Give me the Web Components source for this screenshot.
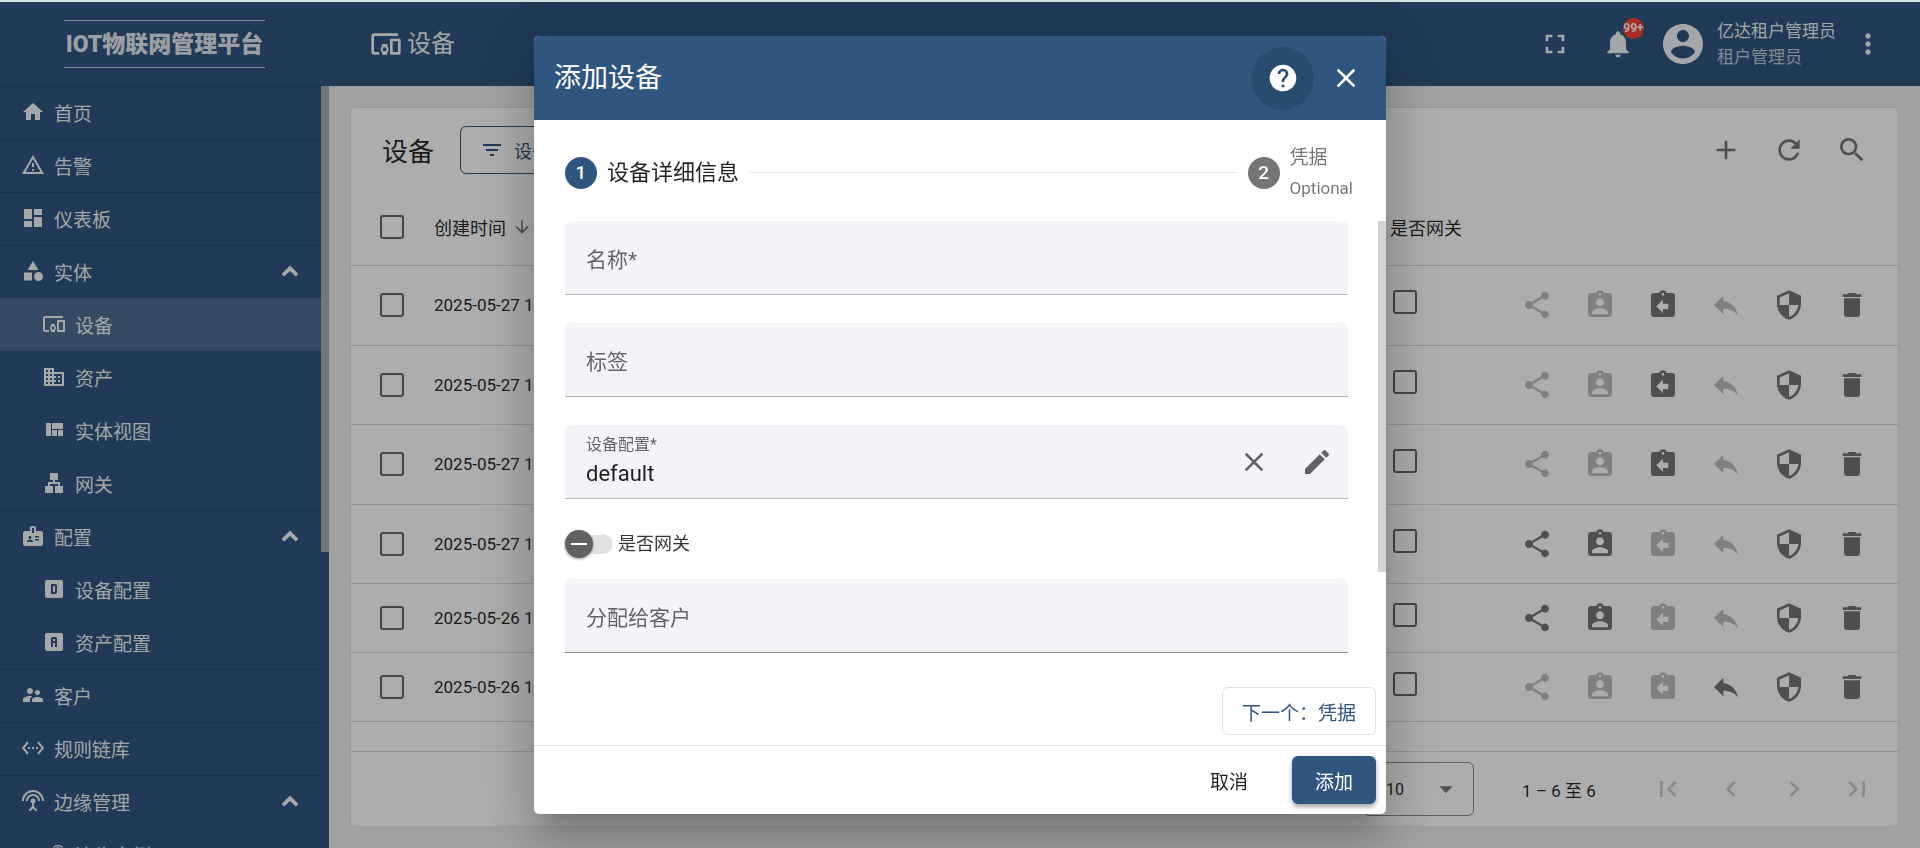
<!DOCTYPE html>
<html lang="zh-CN">
<head>
<meta charset="utf-8">
<title>设备</title>
<style>
  html, body { margin: 0; height: 100%; }
  body {
    font-family: Roboto, "Noto Sans CJK SC", sans-serif;
    --primary: #305680;
    background: #eee;
    overflow: hidden;
  }
</style>
</head>
<body>
<iot-app></iot-app>

<script>
const ICONS = {
  home: 'M10 20v-6h4v6h5v-8h3L12 3 2 12h3v8z',
  alert: 'M12 2L1 21h22M12 6l7.53 13H4.47M11 10v4h2v-4M11 16v2h2v-2',
  dashboard: 'M13 3v6h8V3M13 21h8V11h-8M3 21h8v-6H3M3 13h8V3H3z',
  shapes: 'M12 2L6.5 11h11zM17.5 13a4.5 4.5 0 1 0 0 9 4.5 4.5 0 0 0 0-9zM3 13.5h8v8H3z',
  devices: 'M3 6h18V4H3c-1.1 0-2 .9-2 2v12c0 1.1.9 2 2 2h4v-2H3V6zm10 6H9v1.78c-.61.55-1 1.33-1 2.22s.39 1.67 1 2.22V20h4v-1.78c.61-.55 1-1.34 1-2.22s-.39-1.67-1-2.22V12zm-2 5.5c-.83 0-1.5-.67-1.5-1.5s.67-1.5 1.5-1.5 1.5.67 1.5 1.5-.67 1.5-1.5 1.5zM22 8h-6c-.5 0-1 .5-1 1v10c0 .5.5 1 1 1h6c.5 0 1-.5 1-1V9c0-.5-.5-1-1-1zm-1 10h-4v-8h4v8z',
  domain: 'M12 7V3H2v18h20V7H12zM6 19H4v-2h2v2zm0-4H4v-2h2v2zm0-4H4V9h2v2zm0-4H4V5h2v2zm4 12H8v-2h2v2zm0-4H8v-2h2v2zm0-4H8V9h2v2zm0-4H8V5h2v2zm10 12h-8v-2h2v-2h-2v-2h2v-2h-2V9h8v10zm-2-8h-2v2h2v-2zm0 4h-2v2h2v-2z',
  quilt: 'M10 18h5v-6h-5v6zm-6 0h5V5H4v13zm12 0h5v-6h-5v6zM10 5v6h11V5H10z',
  lan: 'M13 22h8v-7h-3v-4h-5V9h3V2H8v7h3v2H6v4H3v7h8v-7H8v-2h8v2h-3z',
  badge: 'M20 7h-5V4c0-1.1-.9-2-2-2h-2c-1.1 0-2 .9-2 2v3H4c-1.1 0-2 .9-2 2v11c0 1.1.9 2 2 2h16c1.1 0 2-.9 2-2V9c0-1.1-.9-2-2-2zM9 12c.83 0 1.5.67 1.5 1.5S9.83 15 9 15s-1.5-.67-1.5-1.5S8.17 12 9 12zm3 6H6v-.75c0-1 2-1.5 3-1.5s3 .5 3 1.5V18zm1-9h-2V4h2v5zm5 7.5h-4V15h4v1.5zm0-3h-4V12h4v1.5z',
  boxD: 'M9 7h4a2 2 0 0 1 2 2v6a2 2 0 0 1-2 2H9V7m2 2v6h2V9h-2M5 3h14a2 2 0 0 1 2 2v14a2 2 0 0 1-2 2H5a2 2 0 0 1-2-2V5a2 2 0 0 1 2-2z',
  boxA: 'M11 7h2a2 2 0 0 1 2 2v8h-2v-4h-2v4H9V9a2 2 0 0 1 2-2m0 2v2h2V9h-2M5 3h14a2 2 0 0 1 2 2v14a2 2 0 0 1-2 2H5a2 2 0 0 1-2-2V5a2 2 0 0 1 2-2z',
  people: 'M16.5 12c1.38 0 2.49-1.12 2.49-2.5S17.88 7 16.5 7 14 8.12 14 9.5s1.12 2.5 2.5 2.5zM9 11c1.66 0 2.99-1.34 2.99-3S10.66 5 9 5 6 6.34 6 8s1.34 3 3 3zm7.5 3c-1.83 0-5.5.92-5.5 2.75V19h11v-2.25c0-1.83-3.67-2.75-5.5-2.75zM9 13c-2.33 0-7 1.17-7 3.5V19h7v-2.25c0-.85.33-2.34 2.37-3.47C10.5 13.1 9.66 13 9 13z',
  ethernet: 'M7.77 6.76L6.23 5.48.82 12l5.41 6.52 1.54-1.28L3.42 12l4.35-5.24zM7 13h2v-2H7v2zm10-2h-2v2h2v-2zm-6 2h2v-2h-2v2zm6.77-7.52l-1.54 1.28L20.58 12l-4.35 5.24 1.54 1.28L23.18 12l-5.41-6.52z',
  antenna: 'M12 5c-3.87 0-7 3.13-7 7h2c0-2.76 2.24-5 5-5s5 2.24 5 5h2c0-3.87-3.13-7-7-7zm1 9.29c.88-.39 1.5-1.26 1.5-2.29 0-1.38-1.12-2.5-2.5-2.5S9.5 10.62 9.5 12c0 1.02.62 1.9 1.5 2.29v3.3L7.59 21 9 22.41l3-3 3 3L16.41 21 13 17.59v-3.3zM12 1C5.93 1 1 5.93 1 12h2c0-4.97 4.03-9 9-9s9 4.03 9 9h2c0-6.07-4.93-11-11-11z',
  router: 'M20.2 5.9l.8-.8C19.6 3.7 17.8 3 16 3s-3.6.7-5 2.1l.8.8C13 4.8 14.5 4.2 16 4.2s3 .6 4.2 1.7zm-.9.8c-.9-.9-2.1-1.4-3.3-1.4s-2.4.5-3.3 1.4l.8.8c.7-.7 1.6-1 2.5-1 .9 0 1.8.3 2.5 1l.8-.8zM19 13h-2V9h-2v4H5c-1.1 0-2 .9-2 2v4c0 1.1.9 2 2 2h14c1.1 0 2-.9 2-2v-4c0-1.1-.9-2-2-2z',
  chevron: 'M12 6.5l8.4 8.4-2.7 2.7L12 11.9l-5.7 5.7-2.7-2.7z',
  fullscreen: 'M7 14H5v5h5v-2H7v-3zm-2-4h2V7h3V5H5v5zm12 7h-3v2h5v-5h-2v3zM14 5v2h3v3h2V5h-5z',
  bell: 'M12 22c1.1 0 2-.9 2-2h-4c0 1.1.89 2 2 2zm6-6v-5c0-3.07-1.64-5.64-4.5-6.32V4c0-.83-.67-1.5-1.5-1.5s-1.5.67-1.5 1.5v.68C7.63 5.36 6 7.92 6 11v5l-2 2v1h16v-1l-2-2z',
  account: 'M12 2C6.48 2 2 6.48 2 12s4.48 10 10 10 10-4.48 10-10S17.52 2 12 2zm0 3c1.66 0 3 1.34 3 3s-1.34 3-3 3-3-1.34-3-3 1.34-3 3-3zm0 14.2c-2.5 0-4.71-1.28-6-3.22.03-1.99 4-3.08 6-3.08 1.99 0 5.97 1.09 6 3.08-1.29 1.94-3.5 3.22-6 3.22z',
  more: 'M12 8c1.1 0 2-.9 2-2s-.9-2-2-2-2 .9-2 2 .9 2 2 2zm0 2c-1.1 0-2 .9-2 2s.9 2 2 2 2-.9 2-2-.9-2-2-2zm0 6c-1.1 0-2 .9-2 2s.9 2 2 2 2-.9 2-2-.9-2-2-2z',
  add: 'M19 13h-6v6h-2v-6H5v-2h6V5h2v6h6v2z',
  refresh: 'M17.65 6.35C16.2 4.9 14.21 4 12 4c-4.42 0-7.99 3.58-7.99 8s3.57 8 7.99 8c3.73 0 6.84-2.55 7.73-6h-2.08c-.82 2.33-3.04 4-5.65 4-3.31 0-6-2.69-6-6s2.69-6 6-6c1.66 0 3.14.69 4.22 1.78L13 11h7V4l-2.35 2.35z',
  search: 'M15.5 14h-.79l-.28-.27C15.41 12.59 16 11.11 16 9.5 16 5.91 13.09 3 9.5 3S3 5.91 3 9.5 5.91 16 9.5 16c1.61 0 3.09-.59 4.23-1.57l.27.28v.79l5 4.99L20.49 19l-4.99-5zm-6 0C7.01 14 5 11.99 5 9.5S7.01 5 9.5 5 14 7.01 14 9.5 11.99 14 9.5 14z',
  filter: 'M10 18h4v-2h-4v2zM3 6v2h18V6H3zm3 7h12v-2H6v2z',
  down: 'M20 12l-1.41-1.41L13 16.17V4h-2v12.17l-5.58-5.59L4 12l8 8 8-8z',
  share: 'M18 16.08c-.76 0-1.44.3-1.96.77L8.91 12.7c.05-.23.09-.46.09-.7s-.04-.47-.09-.7l7.05-4.11c.54.5 1.25.81 2.04.81 1.66 0 3-1.34 3-3s-1.34-3-3-3-3 1.34-3 3c0 .24.04.47.09.7L8.04 9.81C7.5 9.31 6.79 9 6 9c-1.66 0-3 1.34-3 3s1.34 3 3 3c.79 0 1.5-.31 2.04-.81l7.12 4.16c-.05.21-.08.43-.08.65 0 1.61 1.31 2.92 2.92 2.92s2.92-1.31 2.92-2.92-1.31-2.92-2.92-2.92z',
  assign: 'M19 3h-4.18C14.4 1.84 13.3 1 12 1c-1.3 0-2.4.84-2.82 2H5c-1.1 0-2 .9-2 2v14c0 1.1.9 2 2 2h14c1.1 0 2-.9 2-2V5c0-1.1-.9-2-2-2zm-7 0c.55 0 1 .45 1 1s-.45 1-1 1-1-.45-1-1 .45-1 1-1zm0 4c1.66 0 3 1.34 3 3s-1.34 3-3 3-3-1.34-3-3 1.34-3 3-3zm6 12H6v-1.4c0-2 4-3.1 6-3.1s6 1.1 6 3.1V19z',
  unassign: 'M19 3h-4.18C14.4 1.84 13.3 1 12 1c-1.3 0-2.4.84-2.82 2H5c-1.1 0-2 .9-2 2v14c0 1.1.9 2 2 2h14c1.1 0 2-.9 2-2V5c0-1.1-.9-2-2-2zm-7 0c.55 0 1 .45 1 1s-.45 1-1 1-1-.45-1-1 .45-1 1-1zm4 12h-4v3l-5-5 5-5v3h4v4z',
  reply: 'M10 9V5l-7 7 7 7v-4.1c5 0 8.5 1.6 11 5.1-1-5-4-10-11-11z',
  security: 'M12 1L3 5v6c0 5.55 3.84 10.74 9 12 5.16-1.26 9-6.45 9-12V5l-9-4zm0 10.99h7c-.53 4.12-3.28 7.79-7 8.94V12H5V6.3l7-3.11v8.8z',
  trash: 'M6 19c0 1.1.9 2 2 2h8c1.1 0 2-.9 2-2V7H6v12zM19 4h-3.5l-1-1h-5l-1 1H5v2h14V4z',
  help: 'M12 2C6.48 2 2 6.48 2 12s4.48 10 10 10 10-4.48 10-10S17.52 2 12 2zm1 17h-2v-2h2v2zm2.07-7.75l-.9.92C13.45 12.9 13 13.5 13 15h-2v-.5c0-1.1.45-2.1 1.17-2.83l1.24-1.26c.37-.36.59-.86.59-1.41 0-1.1-.9-2-2-2s-2 .9-2 2H8c0-2.21 1.79-4 4-4s4 1.79 4 4c0 .88-.36 1.68-.93 2.25z',
  close: 'M19 6.41L17.59 5 12 10.59 6.41 5 5 6.41 10.59 12 5 17.59 6.41 19 12 13.41 17.59 19 19 17.59 13.41 12z',
  edit: 'M3 17.25V21h3.75L17.81 9.94l-3.75-3.75L3 17.25zM20.71 7.04c.39-.39.39-1.02 0-1.41l-2.34-2.34c-.39-.39-1.02-.39-1.41 0l-1.83 1.83 3.75 3.75 1.83-1.83z',
  dropdown: 'M7 10l5 5 5-5z',
  first: 'M18.41 16.59L13.82 12l4.59-4.59L17 6l-6 6 6 6zM6 6h2v12H6z',
  prev: 'M15.41 7.41L14 6l-6 6 6 6 1.41-1.41L10.83 12z',
  next: 'M10 6L8.59 7.41 13.17 12l-4.58 4.59L10 18l6-6z',
  last: 'M5.59 7.41L10.18 12l-4.59 4.59L7 18l6-6-6-6zM16 6h2v12h-2z'
};

class BaseElement extends HTMLElement {
  connectedCallback() {
    if (this.shadowRoot) return;
    this.attachShadow({ mode: 'open' }).innerHTML =
      `<style>*{box-sizing:border-box}${this.styles()}</style>${this.markup()}`;
  }
}

/* <ui-icon name size> */
customElements.define('ui-icon', class extends BaseElement {
  styles() {
    const s = this.getAttribute('size') || 32;
    return `:host{display:block;flex:none;width:${s}px;height:${s}px}
      svg{display:block;width:100%;height:100%;fill:currentColor}`;
  }
  markup() {
    return `<svg viewBox="0 0 24 24" aria-hidden="true"><path fill-rule="evenodd" d="${ICONS[this.getAttribute('name')]}"/></svg>`;
  }
});

/* <icon-button icon label [disabled] [active]> */
customElements.define('icon-button', class extends BaseElement {
  styles() {
    return `:host{display:block;flex:none}
      button{display:flex;align-items:center;justify-content:center;width:63px;height:63px;padding:0;border:0;border-radius:50%;background:none;color:inherit}
      button:disabled{color:var(--disabled,rgba(0,0,0,.26))}
      :host([active]) button{background:rgba(0,0,0,.12)}`;
  }
  markup() {
    return `<button type="button" aria-label="${this.getAttribute('label')}" ${this.hasAttribute('disabled') ? 'disabled' : ''}><ui-icon name="${this.getAttribute('icon')}"></ui-icon></button>`;
  }
});

customElements.define('check-box', class extends BaseElement {
  styles() {
    return `:host{display:block;width:24px;height:24px}
      input{appearance:none;display:block;width:24px;height:24px;margin:0;border:2px solid rgba(0,0,0,.6);border-radius:3px}`;
  }
  markup() { return `<input type="checkbox" aria-label="${this.getAttribute('label')}">`; }
});

/* <nav-item icon [sub] [active] [expanded]>text</nav-item> */
customElements.define('nav-item', class extends BaseElement {
  styles() {
    return `:host{display:block;border-top:1px solid rgba(0,0,0,.12)}
      :host([sub]){border-top-color:transparent}
      :host([active]){background:rgba(255,255,255,.15)}
      a{display:flex;align-items:center;gap:9px;height:52px;padding:0 19px 2px 21px;color:rgba(255,255,255,.95);font-size:19px;text-decoration:none}
      :host([sub]) a{padding-left:42px}
      span{flex:1}`;
  }
  markup() {
    return `<a href="#"><ui-icon name="${this.getAttribute('icon')}" size="24"></ui-icon><span><slot></slot></span>${this.hasAttribute('expanded') ? '<ui-icon name="chevron" size="24"></ui-icon>' : ''}</a>`;
  }
});

customElements.define('side-nav', class extends BaseElement {
  styles() {
    return `:host{display:flex;flex-direction:column;min-height:0;background:var(--primary);color:#fff}
      .logo{flex:none;height:84px;padding:18px 0 0 64px}
      .logo b{display:flex;align-items:center;justify-content:center;width:201px;height:48px;padding-bottom:4px;border:solid rgba(255,255,255,.7);border-width:1px 0;font-size:23px;font-weight:900;color:rgba(255,255,255,.9);white-space:nowrap}
      .scroll{flex:1;min-height:0;display:flex;overflow:hidden}
      nav{flex:1}
      .bar{width:8px}
      .thumb{height:466px;background:#a9b0b9}`;
  }
  markup() {
    return `<div class="logo"><b>IOT物联网管理平台</b></div>
      <div class="scroll"><nav>
        <nav-item icon="home">首页</nav-item>
        <nav-item icon="alert">告警</nav-item>
        <nav-item icon="dashboard">仪表板</nav-item>
        <nav-item icon="shapes" expanded>实体</nav-item>
        <nav-item icon="devices" sub active>设备</nav-item>
        <nav-item icon="domain" sub>资产</nav-item>
        <nav-item icon="quilt" sub>实体视图</nav-item>
        <nav-item icon="lan" sub>网关</nav-item>
        <nav-item icon="badge" expanded>配置</nav-item>
        <nav-item icon="boxD" sub>设备配置</nav-item>
        <nav-item icon="boxA" sub>资产配置</nav-item>
        <nav-item icon="people">客户</nav-item>
        <nav-item icon="ethernet">规则链库</nav-item>
        <nav-item icon="antenna" expanded>边缘管理</nav-item>
        <nav-item icon="router" sub>边缘实例</nav-item>
      </nav><div class="bar"><div class="thumb"></div></div></div>`;
  }
});

customElements.define('top-bar', class extends BaseElement {
  styles() {
    return `:host{display:flex;align-items:center;height:84px;padding:0 21px 0 41px;background:var(--primary);color:rgba(255,255,255,.95)}
      h1{flex:1;display:flex;align-items:center;gap:5px;margin:0;font-size:24px;line-height:32px;font-weight:400}
      .bell{position:relative}
      .count{position:absolute;top:5px;right:5px;width:21px;height:21px;border-radius:50%;background:#f44336;font:700 12px/21px Roboto,sans-serif;text-align:center}
      .user{display:flex;align-items:center;gap:10px;margin-left:10px;font-size:17px;line-height:26px}
      .role{color:rgba(255,255,255,.7)}`;
  }
  markup() {
    return `<h1><ui-icon name="devices"></ui-icon>设备</h1>
      <icon-button icon="fullscreen" label="全屏"></icon-button>
      <div class="bell"><icon-button icon="bell" label="通知"></icon-button><span class="count">99+</span></div>
      <div class="user"><ui-icon name="account" size="48"></ui-icon><div><div>亿达租户管理员</div><div class="role">租户管理员</div></div></div>
      <icon-button icon="more" label="更多"></icon-button>`;
  }
});

/* rows: [created, icons that are enabled] */
const ROWS = [
  ['2025-05-27 1', ['unassign']],
  ['2025-05-27 1', ['unassign']],
  ['2025-05-27 1', ['unassign']],
  ['2025-05-27 1', ['share', 'assign']],
  ['2025-05-26 1', ['share', 'assign']],
  ['2025-05-26 1', ['reply']]
];
const ACTIONS = [['share', '公开'], ['assign', '分配给客户'], ['unassign', '取消分配'], ['reply', '设为私有'], ['security', '管理凭据'], ['trash', '删除']];

customElements.define('device-table', class extends BaseElement {
  styles() {
    return `:host{display:block}
      table{width:100%;border-collapse:collapse;table-layout:fixed}
      th,td{height:80px;padding:0;border-bottom:1px solid #dcdcdc;text-align:left;font-weight:400;color:rgba(0,0,0,.87);white-space:nowrap}
      th{height:74px;padding-bottom:2px;font-size:18px}
      td{font-size:17px}
      tr:nth-child(even) td{height:79px}
      tr:nth-child(n+5) td{height:69px}
      .pick{width:83px;padding-left:29px}
      .time{width:200px}
      .gate{width:115px}
      td.gate{padding:0 0 6px 3px}
      .ops{width:393px}
      .sort,.acts{display:flex;align-items:center}
      .sort{gap:6px}
      .sort ui-icon,.acts{color:rgba(0,0,0,.54)}`;
  }
  markup() {
    const rows = ROWS.map(([time, on]) => `<tr>
      <td class="pick"><check-box label="选择"></check-box></td><td>${time}</td><td></td>
      <td class="gate"><check-box label="是否网关"></check-box></td>
      <td><div class="acts">${ACTIONS.map(([icon, label]) =>
        `<icon-button icon="${icon}" label="${label}" ${on.includes(icon) || icon === 'security' || icon === 'trash' ? '' : 'disabled'}></icon-button>`).join('')}</div></td></tr>`).join('');
    return `<table><thead><tr>
      <th class="pick"><check-box label="全选"></check-box></th>
      <th class="time"><div class="sort">创建时间<ui-icon name="down" size="20"></ui-icon></div></th>
      <th></th><th class="gate">是否网关</th><th class="ops"></th></tr></thead><tbody>${rows}</tbody></table>`;
  }
});

customElements.define('device-card', class extends BaseElement {
  styles() {
    return `:host{display:flex;flex-direction:column;margin:21px;border:1px solid #e2e2e2;border-radius:6px;background:#fff;color:rgba(0,0,0,.54);min-height:0}
      header{flex:none;display:flex;align-items:center;height:83px;padding:0 15px 0 31px}
      h2{margin:0 26px 0 0;font-size:26px;font-weight:400;color:rgba(0,0,0,.87)}
      .filter{display:flex;align-items:center;gap:10px;width:200px;height:48px;padding:0 0 0 19px;border:1px solid var(--primary);border-radius:6px;background:none;color:var(--primary);font:inherit;font-size:18px}
      .tools{display:flex;margin-left:auto}
      footer{flex:none;display:flex;align-items:center;justify-content:flex-end;height:75px;margin-top:auto;padding-right:10px;border-top:1px solid #dcdcdc;--disabled:rgba(0,0,0,.2)}
      .size{display:grid;align-items:center;width:111px;margin-right:48px}
      .size>*{grid-area:1/1}
      .size ui-icon{justify-self:end;margin-right:12px}
      select{appearance:none;width:100%;height:54px;padding:0 22px;border:1px solid #8c8c8c;border-radius:6px;background:none;color:rgba(0,0,0,.87);font:inherit;font-size:16px}
      .range{width:114px;font-size:17px;color:rgba(0,0,0,.87)}`;
  }
  markup() {
    return `<header><h2>设备</h2>
        <button class="filter" type="button"><ui-icon name="filter" size="24"></ui-icon>设备</button>
        <div class="tools"><icon-button icon="add" label="添加设备"></icon-button><icon-button icon="refresh" label="刷新"></icon-button><icon-button icon="search" label="搜索"></icon-button></div>
      </header>
      <device-table></device-table>
      <footer>
        <div class="size"><select aria-label="每页条数"><option>10</option></select><ui-icon name="dropdown"></ui-icon></div>
        <span class="range">1 – 6 至 6</span>
        <icon-button icon="first" label="第一页" disabled></icon-button><icon-button icon="prev" label="上一页" disabled></icon-button><icon-button icon="next" label="下一页" disabled></icon-button><icon-button icon="last" label="最后一页" disabled></icon-button>
      </footer>`;
  }
});

/* <form-field label [value] [strong]> with trailing buttons in the slot */
customElements.define('form-field', class extends BaseElement {
  styles() {
    return `:host{display:flex;align-items:center;height:74px;padding:0 0 0 21px;border-bottom:1px solid #b4b5b8;border-radius:6px 6px 0 0;background:#f3f4f8;color:rgba(0,0,0,.6)}
      :host([strong]){border-bottom-color:#8b8c90}
      .box{flex:1;display:grid;align-items:center;padding-top:4px}
      .box>*{grid-area:1/1}
      label{font-size:21px;line-height:28px}
      input{width:100%;height:28px;padding:0;border:0;outline:0;background:none;font:inherit;font-size:22px;color:rgba(0,0,0,.87)}
      :host([value]) .box{gap:3px;padding:0 0 3px}
      :host([value]) .box>*{grid-area:auto}
      :host([value]) label{font-size:16px;line-height:24px}
      slot{display:flex}`;
  }
  markup() {
    return `<div class="box"><label for="f">${this.getAttribute('label')}</label><input id="f" type="text" value="${this.getAttribute('value') || ''}"></div><slot></slot>`;
  }
});

customElements.define('slide-toggle', class extends BaseElement {
  styles() {
    return `:host{display:block}
      label{display:flex;align-items:center;gap:5px;font-size:18px;line-height:28px;color:rgba(0,0,0,.8)}
      input{appearance:none;display:grid;align-items:center;width:48px;height:28px;margin:0;background:linear-gradient(#e0e0e0,#e0e0e0) 14px 5px/24px 19px no-repeat,radial-gradient(circle at 38px 14px,#e0e0e0 9px,transparent 10px)}
      input::before{content:"";grid-area:1/1;width:28px;height:28px;border-radius:50%;background:linear-gradient(#fff,#fff) center/16px 2px no-repeat #616161;box-shadow:0 1px 3px rgba(0,0,0,.4)}`;
  }
  markup() { return `<label><input type="checkbox" role="switch"><slot></slot></label>`; }
});

customElements.define('step-header', class extends BaseElement {
  styles() {
    return `:host{display:flex;align-items:center;height:101px;padding:4px 33px 0 31px}
      .num{flex:none;width:32px;height:32px;border-radius:50%;background:#757575;color:#fff;font-size:19px;font-weight:500;line-height:32px;text-align:center}
      .on{background:var(--primary)}
      .cur{margin:0 10px;font-size:22px;line-height:32px;color:rgba(0,0,0,.87)}
      hr{flex:1;margin:0 10px 0 0;border:0;border-top:1px solid #e8e8e8}
      .next{margin-left:10px;font-size:19px;line-height:31px;color:rgba(0,0,0,.54)}
      small{display:block;font-size:17px}`;
  }
  markup() {
    return `<span class="num on">1</span><span class="cur">设备详细信息</span><hr><span class="num">2</span><div class="next">凭据<small>Optional</small></div>`;
  }
});

customElements.define('add-device-dialog', class extends BaseElement {
  styles() {
    return `:host{display:block;width:852px;max-width:90vw;border-radius:5px;overflow:hidden;background:#fff;box-shadow:0 14px 20px -9px rgba(0,0,0,.2),0 32px 50px 4px rgba(0,0,0,.14),0 12px 60px 10px rgba(0,0,0,.12)}
      header{display:flex;align-items:center;height:84px;padding:0 9px 0 20px;background:var(--primary);color:#fff}
      h2{flex:1;margin:0;font-size:27px;line-height:40px;font-weight:400}
      .body{display:flex}
      .fields{flex:1;display:flex;flex-direction:column;gap:28px;padding:0 30px 0 31px}
      .fields icon-button{color:rgba(0,0,0,.6)}
      .group{display:flex;flex-direction:column;gap:21px;padding-top:3px}
      .bar{width:8px}
      .thumb{height:351px;background:#d3d3d3}
      button{height:48px;border-radius:6px;font:inherit;font-size:19px;padding:0}
      .step{display:flex;justify-content:flex-end;padding:34px 10px 10px}
      .next{width:154px;border:1px solid #e0e0e0;background:#fff;color:var(--primary)}
      footer{display:flex;justify-content:flex-end;gap:21px;padding:10px;border-top:1px solid #e0e0e0}
      .cancel{width:84px;border:0;background:none;color:rgba(0,0,0,.87)}
      .add{width:84px;border:0;background:var(--primary);color:#fff;box-shadow:0 3px 5px rgba(0,0,0,.35)}`;
  }
  markup() {
    return `<section role="dialog" aria-labelledby="t">
      <header><h2 id="t">添加设备</h2><icon-button icon="help" label="帮助" active></icon-button><icon-button icon="close" label="关闭"></icon-button></header>
      <step-header></step-header>
      <div class="body"><div class="fields">
        <form-field label="名称*"></form-field>
        <form-field label="标签"></form-field>
        <form-field label="设备配置*" value="default"><icon-button icon="close" label="清除"></icon-button><icon-button icon="edit" label="编辑"></icon-button></form-field>
        <div class="group"><slide-toggle>是否网关</slide-toggle><form-field label="分配给客户" strong></form-field></div>
      </div><div class="bar"><div class="thumb"></div></div></div>
      <div class="step"><button class="next" type="button">下一个：凭据</button></div>
      <footer><button class="cancel" type="button">取消</button><button class="add" type="button">添加</button></footer>
    </section>`;
  }
});

customElements.define('iot-app', class extends BaseElement {
  styles() {
    return `:host{display:grid;grid-template-columns:329px 1fr;height:100vh;box-sizing:border-box;border-top:2px solid #d3e6e4}
      side-nav{overflow:hidden}
      main{display:flex;flex-direction:column;min-width:0;min-height:0}
      device-card{flex:1}
      .backdrop{position:fixed;inset:2px 0 0;display:flex;align-items:center;justify-content:center;background:rgba(0,0,0,.32)}`;
  }
  markup() {
    return `<side-nav></side-nav><main><top-bar></top-bar><device-card></device-card></main>
      <div class="backdrop"><add-device-dialog></add-device-dialog></div>`;
  }
});
</script>
</body>
</html>
